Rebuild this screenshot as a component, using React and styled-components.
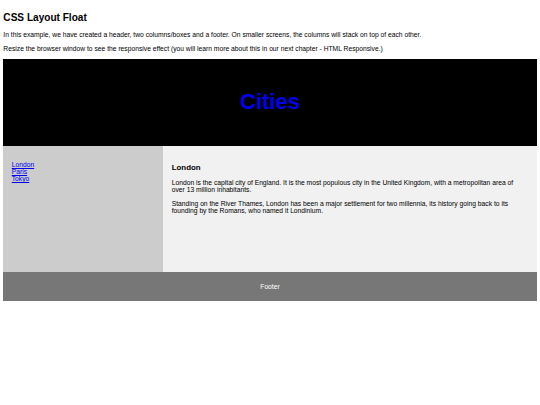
import * as React from 'react';
import styled, { createGlobalStyle } from 'styled-components';

const GlobalStyle = createGlobalStyle`
  body {
    margin: 3.36px;
    font-family: "Liberation Sans", Arial, Helvetica, sans-serif;
    font-size: 6.72px;
    color: #000;
    background: #fff;
  }
  * {
    box-sizing: border-box;
  }
`;

const PageTitle = styled.h2`
  font-size: 10.08px;
  font-weight: bold;
  margin: 8.4px 0;
`;

const Text = styled.p`
  font-size: 6.72px;
  margin: 6.72px 0;
`;

const Header = styled.header`
  background-color: #000;
  padding: 12.6px;
  text-align: center;
  font-size: 14.7px;
  color: #fff;
`;

const HeaderTitle = styled.h2`
  font-size: 22px;
  margin: 18.3px 0;
  color: #0000ee;
`;

const Section = styled.section`
  display: flex;
`;

const Nav = styled.nav`
  width: 30%;
  height: 126px;
  background: #ccc;
  padding: 8.4px;
`;

const LinkList = styled.ul`
  list-style-type: none;
  padding: 0;
  margin: 6.72px 0;
`;

const CityLink = styled.a`
  color: #0000ee;
  text-decoration: underline;
`;

const Article = styled.article`
  width: 70%;
  height: 126px;
  background-color: #f1f1f1;
  padding: 8.4px 11px 8.4px 8.4px;
`;

const ArticleTitle = styled.h3`
  font-size: 7.86px;
  font-weight: bold;
  margin: 7.86px 0;
`;

const Footer = styled.footer`
  background-color: #777;
  padding: 4.2px;
  text-align: center;
  color: #fff;
`;

const cities = ['London', 'Paris', 'Tokyo'];

const App = () => {
  return (
    <>
      <GlobalStyle />
      <PageTitle>CSS Layout Float</PageTitle>
      <Text>
        In this example, we have created a header, two columns/boxes and a footer. On smaller screens, the columns will
        stack on top of each other.
      </Text>
      <Text>
        Resize the browser window to see the responsive effect (you will learn more about this in our next chapter - HTML
        Responsive.)
      </Text>

      <Header>
        <HeaderTitle>Cities</HeaderTitle>
      </Header>

      <Section>
        <Nav>
          <LinkList>
            {cities.map((city) => (
              <li key={city}>
                <CityLink href="#">{city}</CityLink>
              </li>
            ))}
          </LinkList>
        </Nav>
        <Article>
          <ArticleTitle>London</ArticleTitle>
          <Text>
            London is the capital city of England. It is the most populous city in the United Kingdom, with a
            metropolitan area of over 13 million inhabitants.
          </Text>
          <Text>
            Standing on the River Thames, London has been a major settlement for two millennia, its history going back
            to its founding by the Romans, who named it Londinium.
          </Text>
        </Article>
      </Section>

      <Footer>
        <Text>Footer</Text>
      </Footer>
    </>
  );
};

export default App;
